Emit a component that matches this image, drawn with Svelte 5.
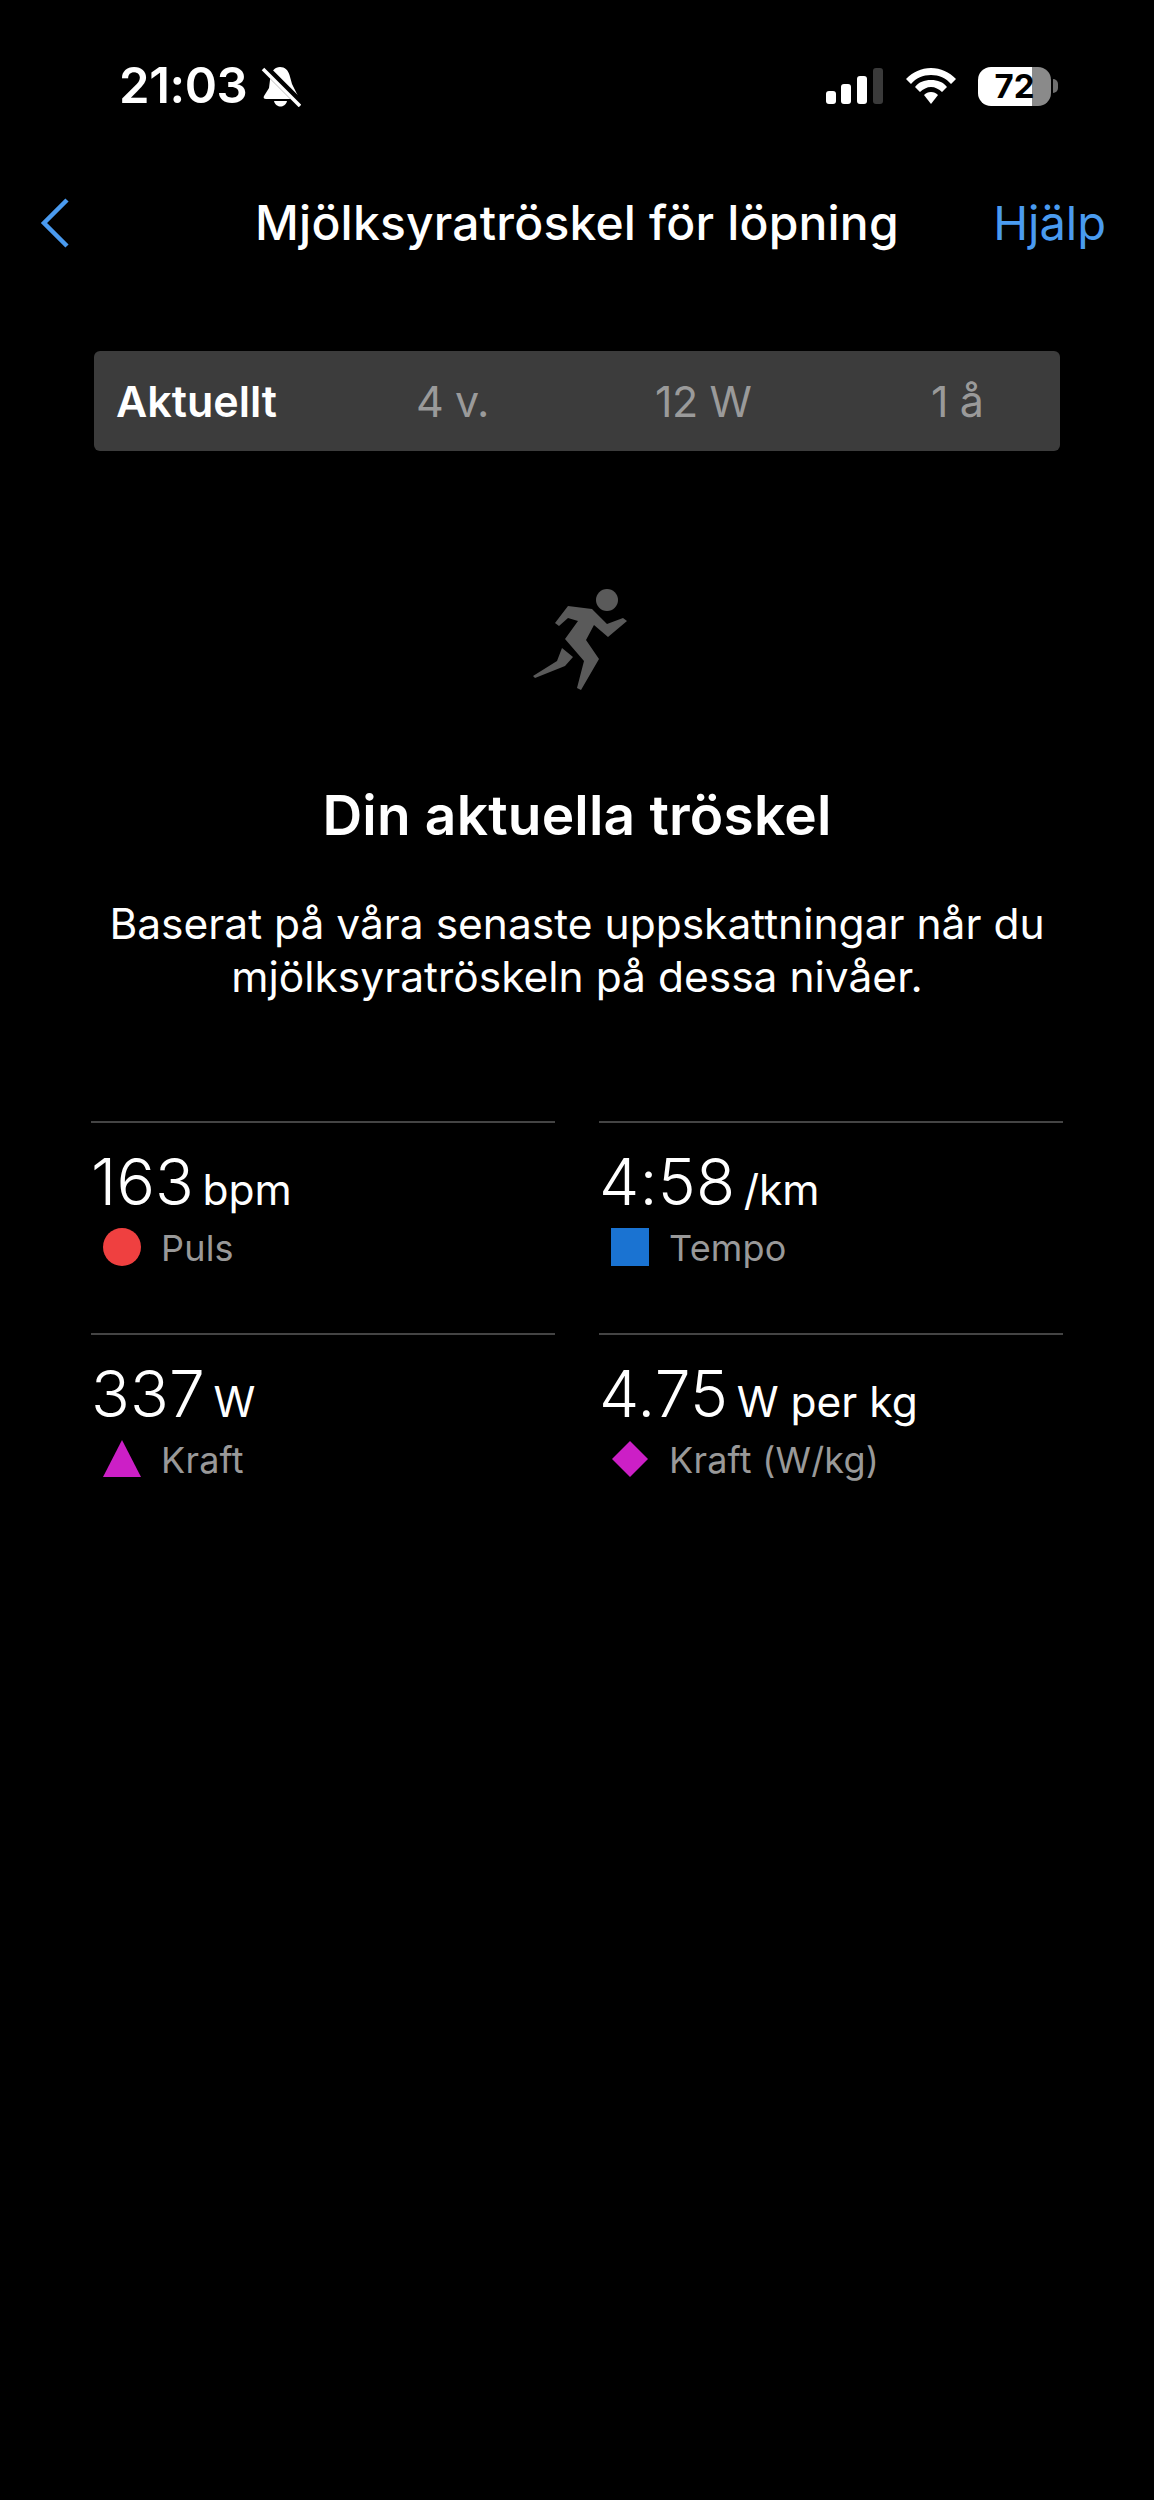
<script>
  const tabs = [
    { label: 'Aktuellt', active: true },
    { label: '4 v.' },
    { label: '12 W' },
    { label: '1 å' }
  ];
  const stats = [
    { value: '163', unit: 'bpm', label: 'Puls', shape: 'circle' },
    { value: '4:58', unit: '/km', label: 'Tempo', shape: 'square' },
    { value: '337', unit: 'W', label: 'Kraft', shape: 'triangle' },
    { value: '4.75', unit: 'W per kg', label: 'Kraft (W/kg)', shape: 'diamond' }
  ];
</script>

<div class="page">
  <header class="status">
    <div class="status-left">
      <span class="time">21:03</span>
      <svg class="bell" width="40" height="42" viewBox="0 0 40 42" aria-hidden="true">
        <path d="M19 2c5 0 8 3 9.500 8l2.500 9 6 12c1 2 0 3-2 3H5c-2 0-3-1-2-3l5-8 1.500-12C10.500 6 14 2 19 2z" fill="#fff"/>
        <path d="M13 36h13c-1 4-4 5.500-6.500 5.500S14 40 13 36z" fill="#fff"/>
        <path d="M3 2l36 36" stroke="#000" stroke-width="8"/>
        <path d="M2 4l37 37" stroke="#fff" stroke-width="3.500"/>
      </svg>
    </div>
    <div class="status-right">
      <svg width="58" height="36" viewBox="0 0 58 36" aria-hidden="true">
        <rect x="0" y="23" width="10" height="13" rx="3" fill="#fff"/>
        <rect x="15" y="16" width="10" height="20" rx="3" fill="#fff"/>
        <rect x="31" y="8" width="10" height="28" rx="3" fill="#fff"/>
        <rect x="47" y="0" width="10" height="36" rx="3" fill="#3a3a3a"/>
      </svg>
      <svg width="50" height="36" viewBox="0 0 50 36" aria-hidden="true">
        <path d="M25 0C15 0 7 4 0 11l5 5c5-6 12-9 20-9s15 3 20 9l5-5C43 4 35 0 25 0z" fill="#fff"/>
        <path d="M25 12c-7 0-12 2-16 7l5 5c3-3 7-5 11-5s8 2 11 5l5-5c-4-5-9-7-16-7z" fill="#fff"/>
        <path d="M25 24c-3 0-5 1-7 3l7 9 7-9c-2-2-4-3-7-3z" fill="#fff"/>
      </svg>
      <div class="battery">
        <div class="cell"><span>72</span></div>
        <div class="nub"></div>
      </div>
    </div>
  </header>

  <nav class="nav">
    <svg class="back" width="32" height="52" viewBox="0 0 32 52" aria-hidden="true">
      <path d="M28 3L5 26l23 23" fill="none" stroke="#4a9bf0" stroke-width="4.500"/>
    </svg>
    <h1>Mjölksyratröskel för löpning</h1>
    <span class="help">Hjälp</span>
  </nav>

  <div class="tabs">
    {#each tabs as t}
      <span class="tab" class:active={t.active}>{t.label}</span>
    {/each}
  </div>

  <svg class="runner" width="150" height="120" viewBox="0 0 150 120" aria-hidden="true">
    <circle cx="107" cy="29" r="11" fill="#5a5a5a"/>
    <path fill="#5a5a5a" d="M55 52L68 35l24 3 15 15 16-6 4 3-19 16-14-12-8 15 13 19-18 31-4-2 7-27-19-22 13-18-10-3-9 8z"/>
    <path fill="#5a5a5a" d="M62 77l11 9-8 9-30 12-2-2 24-15z"/>
  </svg>

  <h2>Din aktuella tröskel</h2>
  <p>Baserat på våra senaste uppskattningar når du<br />mjölksyratröskeln på dessa nivåer.</p>

  <section class="stats">
    {#each stats as s}
      <div class="stat">
        <div class="reading"><span class="value">{s.value}</span> <span class="unit">{s.unit}</span></div>
        <div class="label">
          <svg class="shape" width="40" height="40" viewBox="0 0 40 40" aria-hidden="true">
            {#if s.shape === 'circle'}
              <circle cx="20" cy="20" r="19" fill="#ef4040"/>
            {:else if s.shape === 'square'}
              <rect x="1" y="1" width="38" height="38" fill="#1a73d2"/>
            {:else if s.shape === 'triangle'}
              <path d="M20 1l19 37H1z" fill="#cc1fc6"/>
            {:else}
              <path d="M20 2l18 18-18 18L2 20z" fill="#cc1fc6"/>
            {/if}
          </svg>
          <span class="label-text">{s.label}</span>
        </div>
      </div>
    {/each}
  </section>
</div>

<style>
  :global(body) {
    margin: 0;
    background: #000;
  }
  .page {
    width: 1154px;
    height: 2500px;
    background: #000;
    color: #fff;
    font-family: Inter, "Liberation Sans", sans-serif;
    overflow: hidden;
  }
  .status {
    display: flex;
    justify-content: space-between;
    align-items: center;
    height: 42px;
    padding: 65px 96px 0 119px;
  }
  .status-left {
    display: flex;
    align-items: center;
    gap: 14px;
  }
  .time {
    font-size: 49px;
    font-weight: 600;
    letter-spacing: -0.4px;
    line-height: 42px;
  }
  .status-right {
    display: flex;
    align-items: center;
    gap: 22px;
  }
  .battery {
    display: flex;
    align-items: center;
    gap: 2px;
  }
  .cell {
    width: 73px;
    height: 39px;
    border-radius: 13px;
    background: linear-gradient(to right, #fff 0 54px, #8a8a8a 54px);
    color: #000;
    display: flex;
    align-items: center;
    justify-content: center;
    font-size: 33px;
    font-weight: 700;
    line-height: 1;
  }
  .nub {
    width: 5px;
    height: 14px;
    border-radius: 0 6px 6px 0;
    background: #6e6e6e;
  }
  .nav {
    display: grid;
    grid-template-columns: 1fr auto 1fr;
    align-items: center;
    height: 60px;
    margin-top: 86px;
    padding: 0 44px 0 44px;
  }
  .back {
    display: block;
    margin-left: -5px;
  }
  h1 {
    margin: 0;
    font-size: 48px;
    font-weight: 500;
    letter-spacing: 0.2px;
    line-height: 60px;
    white-space: nowrap;
  }
  .help {
    justify-self: end;
    color: #4a9bf0;
    font-size: 47px;
    letter-spacing: 0;
    line-height: 60px;
    margin-right: 4px;
  }
  .tabs {
    display: grid;
    grid-template-columns: 300px 239px 276px 1fr;
    align-items: center;
    box-sizing: border-box;
    width: 966px;
    height: 100px;
    margin: 98px 0 0 94px;
    padding: 0 0 0 22px;
    background: #3c3c3c;
    border-radius: 6px;
    font-size: 43px;
    letter-spacing: -0.4px;
    color: #9a9a9a;
  }
  .tab.active {
    color: #fff;
    font-weight: 600;
    letter-spacing: 0;
  }
  .runner {
    display: block;
    margin: 120px 0 0 500px;
  }
  h2 {
    margin: 91px 0 0;
    text-align: center;
    font-size: 55px;
    font-weight: 600;
    letter-spacing: 0.2px;
    line-height: 66px;
  }
  p {
    margin: 49px 0 0;
    text-align: center;
    font-size: 42.5px;
    line-height: 53px;
  }
  .stats {
    display: grid;
    grid-template-columns: 464px 464px;
    column-gap: 44px;
    margin: 118px 0 0 91px;
  }
  .stat {
    height: 210px;
    border-top: 2px solid #444;
  }
  .reading {
    margin-top: 24px;
    line-height: 70px;
    white-space: nowrap;
  }
  .value {
    font-size: 64px;
    font-weight: 300;
    letter-spacing: 0.2px;
  }
  .unit {
    font-size: 42.5px;
    font-weight: 400;
    margin-left: 4px;
  }
  .label {
    display: flex;
    align-items: center;
    gap: 19px;
    padding-left: 11px;
    margin-top: -9px;
    height: 44px;
    font-size: 36px;
    color: #999;
    letter-spacing: 0.2px;
  }
  .label-text {
    padding-top: 2px;
  }
  .shape {
    display: block;
    flex: none;
  }
</style>
